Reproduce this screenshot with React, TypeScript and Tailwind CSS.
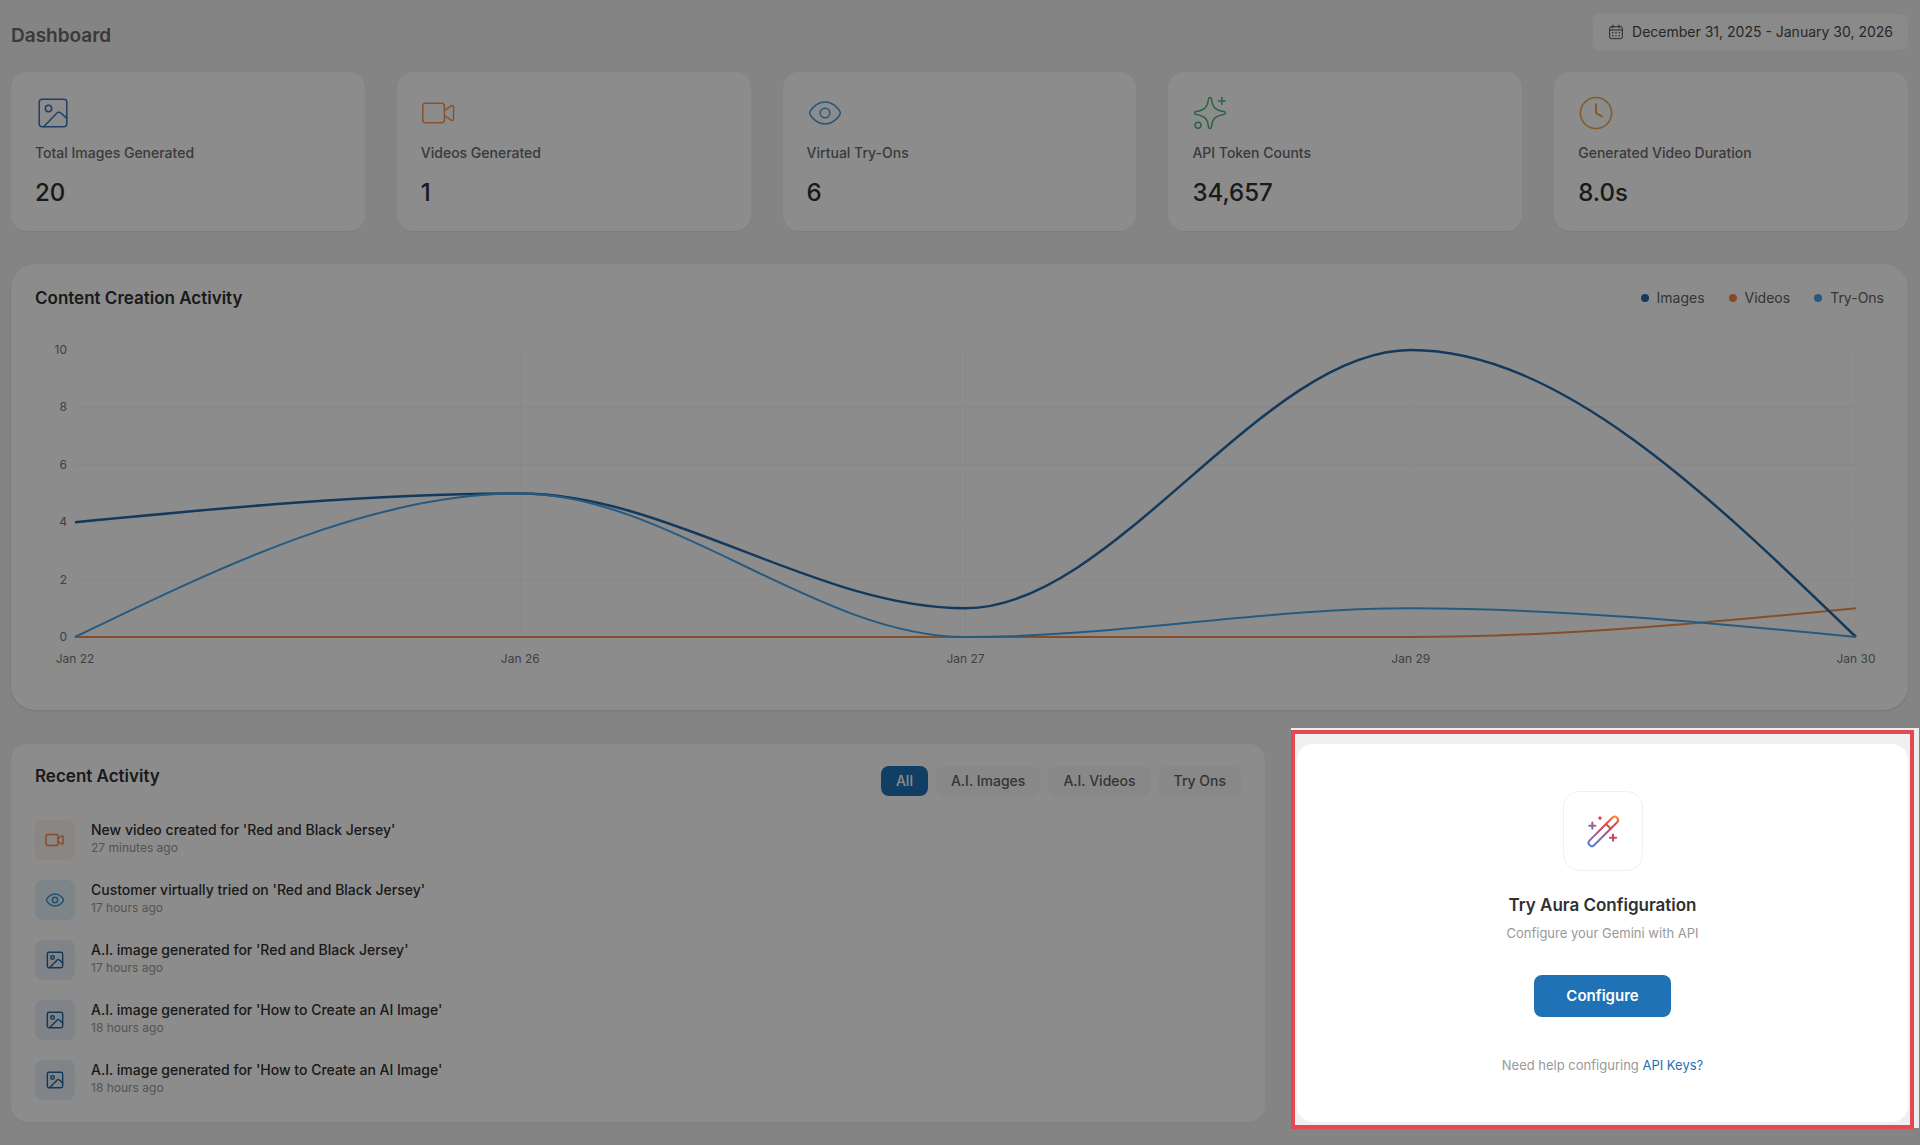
import React, { useState } from "react";

type IconProps = { className?: string; strokeWidth?: number };

function IconBase({
  className,
  strokeWidth = 1,
  children,
}: IconProps & { children: React.ReactNode }) {
  return (
    <svg
      viewBox="0 0 24 24"
      fill="none"
      stroke="currentColor"
      strokeWidth={strokeWidth}
      strokeLinecap="round"
      strokeLinejoin="round"
      aria-hidden="true"
      className={className}
    >
      {children}
    </svg>
  );
}

const ImageIcon = (props: IconProps) => (
  <IconBase {...props}>
    <rect x="2.8" y="2.8" width="18.4" height="18.4" rx="2" />
    <circle cx="9" cy="9" r="2.1" />
    <path d="M5.8 21.1 14.6 12a1.9 1.9 0 0 1 2.7 0l3.9 3.6" />
  </IconBase>
);

const VideoIcon = (props: IconProps) => (
  <IconBase {...props}>
    <rect x="1.2" y="5.5" width="14.4" height="13" rx="1.8" />
    <path d="m15.6 10.2 4.6-3c.8-.5 1.5-.1 1.5.8v8c0 .9-.7 1.3-1.5.8l-4.6-3" />
  </IconBase>
);

const EyeIcon = (props: IconProps) => (
  <IconBase {...props}>
    <path d="M1.8 12c0-1.2 3.9-7.300 10.200-7.300S22.200 10.800 22.200 12s-3.900 7.300-10.200 7.300S1.800 13.200 1.800 12Z" />
    <circle cx="12" cy="12" r="3.2" />
  </IconBase>
);

const SparkleIcon = (props: IconProps) => (
  <IconBase {...props}>
    <path d="M12 1.7c.6 0 .9.5 1 1.1.6 4.7 1.9 7.2 8.2 8.2.7.1 1.1.4 1.1 1s-.4.9-1.1 1c-6.3 1-7.6 3.5-8.2 8.2-.1.6-.4 1.1-1 1.1s-.9-.5-1-1.1c-.6-4.7-1.900-7.200-8.200-8.200-.7-.1-1.100-.4-1.100-1s.4-.9 1.100-1c6.300-1 7.600-3.500 8.200-8.200.1-.6.4-1.100 1-1.100Z" />
    <path d="M19.900 1.700v4.600M17.600 4h4.600" />
    <circle cx="4" cy="20.100" r="2" />
  </IconBase>
);

const ClockIcon = (props: IconProps) => (
  <IconBase {...props}>
    <circle cx="12" cy="12" r="10.4" />
    <path d="M12 6.200V12l4 2.300" strokeWidth="1.3" />
  </IconBase>
);

const CalendarIcon = (props: IconProps) => (
  <IconBase {...props}>
    <rect x="2.5" y="4" width="19" height="18" rx="2.5" />
    <path d="M7.500 1.500V6M16.500 1.500V6M2.500 9h19" />
    <path
      d="M7.200 13h.01M12 13h.01M16.800 13h.01M7.200 17.500h.01M12 17.500h.01M16.800 17.500h.01"
      strokeWidth="2.2"
    />
  </IconBase>
);

const WandIcon = ({ className }: { className?: string }) => (
  <svg
    viewBox="0 0 36 36"
    fill="none"
    stroke="url(#wand-gradient)"
    strokeWidth="2"
    strokeLinecap="round"
    aria-hidden="true"
    className={className}
  >
    <defs>
      <linearGradient
        id="wand-gradient"
        gradientUnits="userSpaceOnUse"
        x1="4"
        y1="33"
        x2="33"
        y2="4"
      >
        <stop offset="0" stopColor="#4a86ee" />
        <stop offset="0.35" stopColor="#7f6cae" />
        <stop offset="0.58" stopColor="#d63f58" />
        <stop offset="0.74" stopColor="#ea4f42" />
        <stop offset="0.94" stopColor="#fbb413" />
      </linearGradient>
    </defs>
    <rect
      x="-1"
      y="15.1"
      width="38.6"
      height="6.6"
      rx="3"
      transform="rotate(-45 18.3 18.4)"
    />
    <path d="m21.200 11.200 4.600 4.600" />
    <path d="M7.300 9.600v6.200M4.200 12.700h6.200M28 21.600v6.200M24.900 24.700h6.200M15 4.200v1.800M14.100 5.100h1.800" />
  </svg>
);

const stats = [
  { label: "Total Images Generated", value: "20", icon: ImageIcon, color: "text-[#3a73b8]" },
  { label: "Videos Generated", value: "1", icon: VideoIcon, color: "text-[#fb9457]" },
  { label: "Virtual Try-Ons", value: "6", icon: EyeIcon, color: "text-[#409fdb]" },
  { label: "API Token Counts", value: "34,657", icon: SparkleIcon, color: "text-[#50b37c]" },
  { label: "Generated Video Duration", value: "8.0s", icon: ClockIcon, color: "text-[#eba545]" },
];

const dates = ["Jan 22", "Jan 26", "Jan 27", "Jan 29", "Jan 30"];
const yTicks = [10, 8, 6, 4, 2, 0];

const series = [
  { name: "Videos", values: [0, 0, 0, 0, 1], color: "#f58f4a", width: 2 },
  { name: "Images", values: [4, 5, 1, 10, 0], color: "#2468a8", width: 2.5 },
  { name: "Try-Ons", values: [0, 5, 0, 1, 0], color: "#48a5e8", width: 2 },
];

const legend = [
  { name: "Images", dot: "bg-[#2a68ac]" },
  { name: "Videos", dot: "bg-[#f08a45]" },
  { name: "Try-Ons", dot: "bg-[#45a4f2]" },
];

const STEP = 300;
const UNIT = 30;

// Monotone curve: flat at inner points, straight-ish at both ends
function curvePath(values: number[]) {
  const y = (v: number) => (10 - v) * UNIT;
  let d = `M0 ${y(values[0])}`;
  for (let i = 1; i < values.length; i++) {
    const prev = values[i - 1];
    const next = values[i];
    const mid = (prev + next) / 2;
    const c1 = i === 1 ? mid : prev;
    const c2 = i === values.length - 1 ? mid : next;
    const x = (i - 1) * STEP;
    d += ` C${x + STEP / 3} ${y(c1)} ${x + (STEP * 2) / 3} ${y(c2)} ${x + STEP} ${y(next)}`;
  }
  return d;
}

const activities = [
  { type: "video", text: "New video created for 'Red and Black Jersey'", time: "27 minutes ago" },
  { type: "tryon", text: "Customer virtually tried on 'Red and Black Jersey'", time: "17 hours ago" },
  { type: "image", text: "A.I. image generated for 'Red and Black Jersey'", time: "17 hours ago" },
  { type: "image", text: "A.I. image generated for 'How to Create an AI Image'", time: "18 hours ago" },
  { type: "image", text: "A.I. image generated for 'How to Create an AI Image'", time: "18 hours ago" },
];

const activityStyles: Record<string, { icon: React.FC<IconProps>; className: string }> = {
  video: { icon: VideoIcon, className: "bg-[#fcf5ee] text-[#f2854a]" },
  tryon: { icon: EyeIcon, className: "bg-[#e6f3f8] text-[#2b98d0]" },
  image: { icon: ImageIcon, className: "bg-[#e9eef6] text-[#2468a4]" },
};

const tabs = [
  { id: "all", label: "All" },
  { id: "image", label: "A.I. Images" },
  { id: "video", label: "A.I. Videos" },
  { id: "tryon", label: "Try Ons" },
];

function StatCards() {
  return (
    <div className="grid grid-cols-5 gap-8">
      {stats.map(({ label, value, icon: Icon, color }) => (
        <div key={label} className="rounded-2xl bg-white px-6 pt-[23px] pb-[22px] shadow-xs">
          <Icon className={`h-9 w-9 ${color}`} />
          <p className="mt-3 text-sm font-medium text-[#6a6a6a]">{label}</p>
          <p className="mt-[14px] text-2xl font-medium text-[#303030]">{value}</p>
        </div>
      ))}
    </div>
  );
}

function ActivityChart() {
  return (
    <section className="mt-[33px] rounded-3xl bg-white px-6 pt-[22px] pb-[41px] shadow-sm">
      <div className="flex items-center justify-between">
        <h2 className="text-[17px] leading-6 font-semibold text-[#303030]">
          Content Creation Activity
        </h2>
        <ul className="flex gap-6">
          {legend.map((item) => (
            <li
              key={item.name}
              className="flex items-center gap-2 text-sm text-[#616161]"
            >
              <span className={`h-2 w-2 rounded-full ${item.dot}`} />
              {item.name}
            </li>
          ))}
        </ul>
      </div>

      <div className="mt-10 flex gap-2 pr-7">
        <div className="flex h-[287px] w-8 flex-col justify-between text-right text-xs text-[#757575]">
          {yTicks.map((tick) => (
            <span key={tick} className="flex h-0 items-center justify-end">
              {tick}
            </span>
          ))}
        </div>
        <div className="flex-1">
          <svg
            viewBox="0 0 1200 300"
            preserveAspectRatio="none"
            fill="none"
            role="img"
            aria-label="Content creation activity"
            className="block h-[287px] w-full overflow-visible"
          >
            {[2, 4, 6, 8].map((v) => (
              <path
                key={v}
                d={`M0 ${(10 - v) * UNIT}H1200`}
                stroke="#f6f6f6"
                vectorEffect="non-scaling-stroke"
              />
            ))}
            {[1, 2, 3, 4].map((i) => (
              <path
                key={i}
                d={`M${i * STEP} 0V300`}
                stroke="#f6f6f6"
                vectorEffect="non-scaling-stroke"
              />
            ))}
            {series.map((s) => (
              <path
                key={s.name}
                d={curvePath(s.values)}
                stroke={s.color}
                strokeWidth={s.width}
                vectorEffect="non-scaling-stroke"
              />
            ))}
          </svg>
          <div className="mt-3 flex justify-between text-xs text-[#757575]">
            {dates.map((date) => (
              <span key={date} className="flex w-0 justify-center leading-5 whitespace-nowrap">
                {date}
              </span>
            ))}
          </div>
        </div>
      </div>
    </section>
  );
}

function RecentActivity() {
  const [filter, setFilter] = useState("all");
  const visible = activities.filter((a) => filter === "all" || a.type === filter);

  return (
    <section className="col-span-2 rounded-2xl bg-white px-6 pt-[22px] pb-[22px] shadow-xs">
      <div className="flex items-start justify-between">
        <h2 className="text-[17px] leading-5 font-semibold text-[#303030]">Recent Activity</h2>
        <div className="flex gap-2">
          {tabs.map((tab) => (
            <button
              key={tab.id}
              type="button"
              onClick={() => setFilter(tab.id)}
              className={`rounded-lg px-[15px] py-[5px] text-sm font-medium ${
                filter === tab.id ? "bg-[#1f72b5] text-white" : "bg-[#f7f7f7] text-[#616161]"
              }`}
            >
              {tab.label}
            </button>
          ))}
        </div>
      </div>

      <ul className="mt-6 flex flex-col gap-5">
        {visible.map((activity, index) => {
          const { icon: Icon, className } = activityStyles[activity.type];
          return (
            <li key={index} className="flex gap-4">
              <span
                className={`flex h-10 w-10 items-center justify-center rounded-lg ${className}`}
              >
                <Icon className="h-5 w-5" strokeWidth={1.75} />
              </span>
              <div>
                <p className="text-sm font-medium text-[#303030]">{activity.text}</p>
                <p className="text-xs text-[#999999]">{activity.time}</p>
              </div>
            </li>
          );
        })}
      </ul>
    </section>
  );
}

function ConfigurationCard() {
  return (
    <section className="relative z-20">
      {/* Spotlight frame around the card */}
      <div className="absolute -top-4 -right-[11px] bottom-[-6px] -left-[6px] bg-[#eeeeee]" />
      <div className="absolute -top-[14px] -right-[6px] -bottom-[7px] -left-[6px] border-4 border-[#e5484f] bg-[#f1f0f0]" />
      <div className="relative flex h-full flex-col items-center justify-center rounded-2xl bg-white">
        <div className="flex h-20 w-20 items-center justify-center rounded-2xl border border-[#f1f1f1]">
          <WandIcon className="h-9 w-9" />
        </div>
        <h2 className="mt-5 text-[17px] leading-7 font-semibold text-[#303030]">
          Try Aura Configuration
        </h2>
        <p className="mt-1 text-[13px] leading-5 text-[#999999]">Configure your Gemini with API</p>
        <button
          type="button"
          className="mt-8 rounded-lg bg-[#1f72b5] px-8 py-[9px] text-[15px] leading-6 font-semibold text-white"
        >
          Configure
        </button>
        <p className="mt-[38px] text-[13px] leading-5 text-[#999999]">
          Need help configuring{" "}
          <a href="#api-keys" className="text-[#1f6fb2]">
            API Keys?
          </a>
        </p>
      </div>
    </section>
  );
}

export default function App() {
  return (
    <main className="relative min-h-screen bg-[#f1f1f1] pt-[14px] pr-3 pb-6 pl-[11px] font-['Inter',sans-serif]">
      <header className="mb-[22px] flex items-end justify-between">
        <h1 className="text-[19px] leading-7 font-semibold text-[#6a6a6a]">Dashboard</h1>
        <button
          type="button"
          className="flex h-9 items-center gap-2 rounded-md bg-[#fbfbfb] px-[15px] text-sm text-[#4a4a4a]"
        >
          <CalendarIcon className="h-4 w-4" strokeWidth={1.5} />
          December 31, 2025 - January 30, 2026
        </button>
      </header>

      <StatCards />
      <ActivityChart />

      <div className="mt-[34px] grid grid-cols-3 gap-8">
        <RecentActivity />
        <ConfigurationCard />
      </div>

      <div className="pointer-events-none absolute inset-0 z-10 bg-black/45" />
    </main>
  );
}
